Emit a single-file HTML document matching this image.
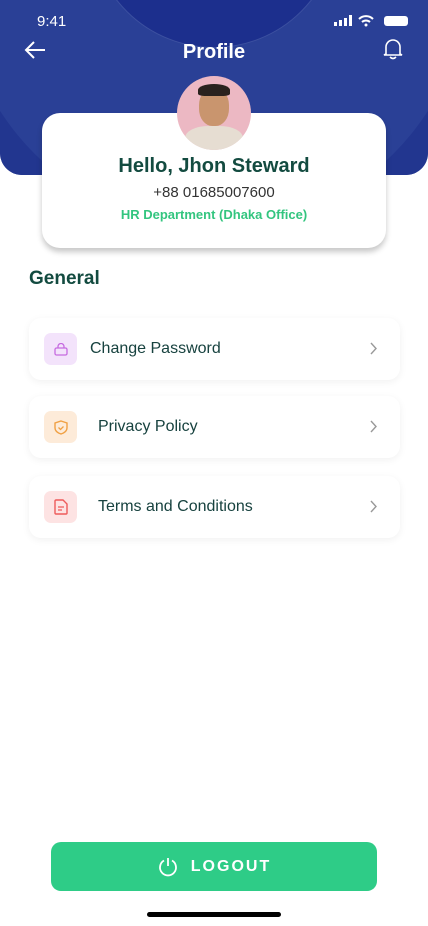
<!DOCTYPE html>
<html><head><meta charset="utf-8"><style>
*{margin:0;padding:0;box-sizing:border-box}
body{width:428px;height:926px;background:#fff;font-family:"Liberation Sans",sans-serif;position:relative;overflow:hidden}
.hdr{position:absolute;left:0;top:0;width:428px;height:175px;background:#1c2f8d;border-radius:0 0 22px 22px;overflow:hidden}
.c{position:absolute;border-radius:50%}
.card{position:absolute;left:42px;top:113px;width:344px;height:135px;background:#fff;border-radius:18px;box-shadow:0 4px 6px rgba(0,0,0,.22);text-align:center}
.av{position:absolute;left:177px;top:76px;width:74px;height:74px;border-radius:50%;background:#ecb8c3;overflow:hidden}
.item{position:absolute;left:29px;width:371px;height:62px;background:#fff;border-radius:12px;box-shadow:0 2px 8px rgba(0,0,0,.06)}
.ic{position:absolute;left:15px;top:15px;width:33px;height:32px;border-radius:7px;display:flex;align-items:center;justify-content:center}
.lbl{position:absolute;top:22px;font-size:16px;color:#17423f}
.ch{position:absolute;right:22px;top:24px}
</style></head><body>
<div class="hdr">
 <div class="c" style="left:-120px;top:-330px;width:668px;height:668px;background:#22368f"></div>
 <div class="c" style="left:-40px;top:-280px;width:508px;height:508px;background:#2a4096"></div>
 <div class="c" style="left:90px;top:-200px;width:248px;height:248px;background:#1c2f8d;border:1px solid #3c50a0"></div>
</div>
<div style="position:absolute;left:37px;top:13px;color:#fff;font-size:15px">9:41</div>
<svg style="position:absolute;left:334px;top:15px" width="76" height="12"><rect x="0" y="7" width="3" height="4" fill="#fff"/><rect x="5" y="5" width="3" height="6" fill="#fff"/><rect x="10" y="3" width="3" height="8" fill="#fff"/><rect x="15" y="0" width="3" height="11" fill="#fff"/><path d="M25 4a10 10 0 0 1 14 0M28 7a6 6 0 0 1 8 0" stroke="#fff" stroke-width="2" fill="none"/><circle cx="32" cy="10" r="1.5" fill="#fff"/><rect x="50" y="1" width="24" height="10" rx="3" fill="#fff"/></svg>
<svg style="position:absolute;left:23px;top:40px" width="24" height="20"><path d="M22 10H3M11 2L3 10l8 8" stroke="#fff" stroke-width="2" fill="none"/></svg>
<div style="position:absolute;left:0;width:428px;top:41px;text-align:center;color:#fff;font-size:20px;font-weight:bold">Profile</div>
<svg style="position:absolute;left:383px;top:38px" width="20" height="22"><path d="M3 16V9a7 7 0 0 1 14 0v7l2 1H1z M7 19q3 3 6 0" stroke="#fff" stroke-width="1.6" fill="none"/></svg>
<div class="card">
 <div style="margin-top:42px;font-size:20px;font-weight:bold;color:#134b40">Hello, Jhon Steward</div>
 <div style="margin-top:6px;font-size:15px;color:#333">+88 01685007600</div>
 <div style="margin-top:6px;font-size:13px;font-weight:bold;color:#33c57f">HR Department (Dhaka Office)</div>
</div>
<div class="av"><div style="position:absolute;left:22px;top:12px;width:30px;height:38px;border-radius:45%;background:#c9956e"></div><div style="position:absolute;left:21px;top:8px;width:32px;height:12px;border-radius:50% 50% 20% 20%;background:#2a221e"></div><div style="position:absolute;left:8px;top:50px;width:58px;height:30px;border-radius:40% 40% 0 0;background:#e6ddd2"></div></div>
<div style="position:absolute;left:29px;top:268px;font-size:19px;font-weight:bold;color:#134b40">General</div>
<div class="item" style="top:318px"><div class="ic" style="background:#f3e3fb"><svg width="14" height="13"><rect x="1" y="5" width="12" height="7" rx="1.5" stroke="#c66be0" stroke-width="1.3" fill="none"/><path d="M4 5V3.5a3 3 0 0 1 6 0V5" stroke="#c66be0" stroke-width="1.3" fill="none"/></svg></div><div class="lbl" style="left:61px">Change Password</div><svg class="ch" width="8" height="13"><path d="M1 1l5 5.5L1 12" stroke="#999" stroke-width="1.4" fill="none"/></svg></div>
<div class="item" style="top:396px"><div class="ic" style="background:#fdebd9"><svg width="14" height="15"><path d="M7 1l6 2v5c0 3-3 5-6 6-3-1-6-3-6-6V3z" stroke="#f0a043" stroke-width="1.4" fill="none"/><path d="M4.5 7.5l2 2 3-3" stroke="#f0a043" stroke-width="1.3" fill="none"/></svg></div><div class="lbl" style="left:69px">Privacy Policy</div><svg class="ch" width="8" height="13"><path d="M1 1l5 5.5L1 12" stroke="#999" stroke-width="1.4" fill="none"/></svg></div>
<div class="item" style="top:476px"><div class="ic" style="background:#fde3e3"><svg width="14" height="16"><path d="M2 1h7l4 4v9a1 1 0 0 1-1 1H2a1 1 0 0 1-1-1V2a1 1 0 0 1 1-1z" stroke="#ee5b5b" stroke-width="1.4" fill="none"/><path d="M4 8h6M4 11h4" stroke="#ee5b5b" stroke-width="1.3"/></svg></div><div class="lbl" style="left:69px">Terms and Conditions</div><svg class="ch" width="8" height="13"><path d="M1 1l5 5.5L1 12" stroke="#999" stroke-width="1.4" fill="none"/></svg></div>
<div style="position:absolute;left:51px;top:842px;width:326px;height:49px;background:#2ecc87;border-radius:10px;color:#fff;font-weight:bold;font-size:16px;letter-spacing:2px;display:flex;align-items:center;justify-content:center"><svg width="22" height="22" style="margin-right:12px"><path d="M7 4.5a8 8 0 1 0 8 0" stroke="#fff" stroke-width="1.8" fill="none"/><path d="M11 2v8" stroke="#fff" stroke-width="1.8"/></svg>LOGOUT</div>
<div style="position:absolute;left:147px;top:912px;width:134px;height:5px;border-radius:3px;background:#000"></div>
</body></html>
